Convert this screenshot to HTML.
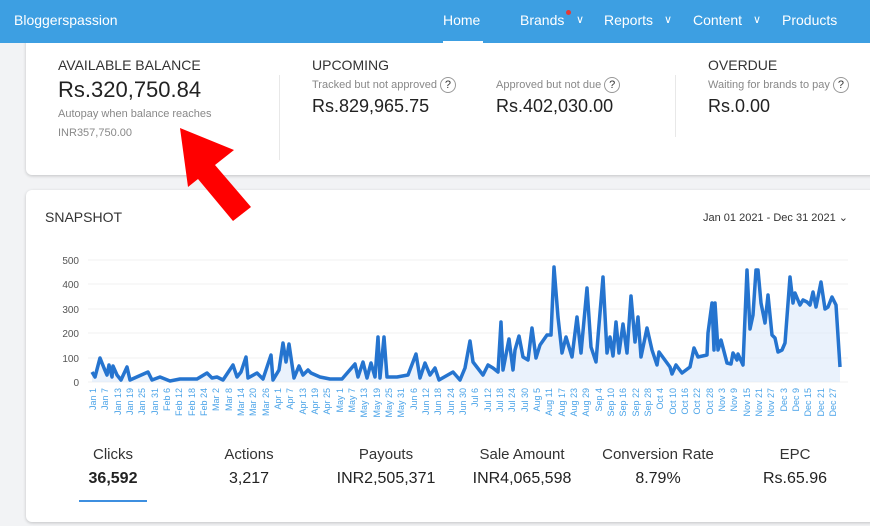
<!DOCTYPE html>
<html><head><meta charset="utf-8"><style>
*{margin:0;padding:0;box-sizing:border-box}
body{width:870px;height:526px;overflow:hidden;background:#f2f3f5;font-family:"Liberation Sans",sans-serif;position:relative;color:#333}
.nav{position:absolute;left:0;top:0;width:870px;height:43px;background:#3d9fe2;color:#fff;font-size:14px;z-index:2}
.nav span{position:absolute;top:12px}
.card{position:absolute;background:#fff;border-radius:6px;box-shadow:0 1px 3px rgba(0,0,0,.2)}
.t{position:absolute;white-space:nowrap}
.q{display:inline-block;width:16px;height:16px;border:1px solid #999;border-radius:50%;font-size:11px;text-align:center;line-height:14px;color:#333;margin-left:3px;vertical-align:middle}
.sl{position:absolute;top:446px;font-size:15px;color:#333;text-align:center;width:140px}
.sv{position:absolute;top:470px;font-size:16px;color:#222;text-align:center;width:150px}
</style></head><body>
<div class="nav">
<span style="left:14px;font-size:14px">Bloggerspassion</span>
<span style="left:443px">Home</span>
<div style="position:absolute;left:443px;top:41px;width:40px;height:2px;background:#fff"></div>
<span style="left:520px">Brands</span>
<div style="position:absolute;left:566px;top:10px;width:5px;height:5px;border-radius:50%;background:#e53935"></div>
<span style="left:576px;top:13px;font-size:11px">∨</span>
<span style="left:604px">Reports</span>
<span style="left:664px;top:13px;font-size:11px">∨</span>
<span style="left:693px">Content</span>
<span style="left:753px;top:13px;font-size:11px">∨</span>
<span style="left:782px">Products</span>
</div>
<div class="card" style="left:26px;top:40px;width:860px;height:135px;border-radius:0 0 6px 6px"></div>
<div style="position:absolute;left:279px;top:75px;width:1px;height:85px;background:#e8e8e8"></div>
<div style="position:absolute;left:675px;top:75px;width:1px;height:62px;background:#e8e8e8"></div>
<div class="t" style="left:58px;top:57px;font-size:14px;color:#333">AVAILABLE BALANCE</div>
<div class="t" style="left:58px;top:77px;font-size:22px;color:#222">Rs.320,750.84</div>
<div class="t" style="left:58px;top:108px;font-size:11px;color:#888">Autopay when balance reaches</div>
<div class="t" style="left:58px;top:127px;font-size:11px;color:#888">INR357,750.00</div>
<div class="t" style="left:312px;top:57px;font-size:14px;color:#333">UPCOMING</div>
<div class="t" style="left:312px;top:77px;font-size:11px;color:#888">Tracked but not approved<span class="q">?</span></div>
<div class="t" style="left:312px;top:96px;font-size:18px;color:#222">Rs.829,965.75</div>
<div class="t" style="left:496px;top:77px;font-size:11px;color:#888">Approved but not due<span class="q">?</span></div>
<div class="t" style="left:496px;top:96px;font-size:18px;color:#222">Rs.402,030.00</div>
<div class="t" style="left:708px;top:57px;font-size:14px;color:#333">OVERDUE</div>
<div class="t" style="left:708px;top:77px;font-size:11px;color:#888">Waiting for brands to pay<span class="q">?</span></div>
<div class="t" style="left:708px;top:96px;font-size:18px;color:#222">Rs.0.00</div>

<div class="card" style="left:26px;top:190px;width:860px;height:332px"></div>
<div class="t" style="left:45px;top:209px;font-size:14px;color:#333">SNAPSHOT</div>
<div class="t" style="left:703px;top:211px;font-size:11px;color:#333">Jan 01 2021 - Dec 31 2021 ⌄</div>
<svg style="position:absolute;left:0;top:0" width="870" height="526">
<g stroke="#f0f0f0" stroke-width="1"><line x1="88" x2="848" y1="260" y2="260"/><line x1="88" x2="848" y1="284" y2="284"/><line x1="88" x2="848" y1="309" y2="309"/><line x1="88" x2="848" y1="333" y2="333"/><line x1="88" x2="848" y1="358" y2="358"/><line x1="88" x2="848" y1="382" y2="382"/></g>
<g font-size="10" fill="#555" text-anchor="end" font-family="Liberation Sans,sans-serif"><text x="79" y="264">500</text><text x="79" y="288">400</text><text x="79" y="313">300</text><text x="79" y="337">200</text><text x="79" y="362">100</text><text x="79" y="386">0</text></g>
<polygon fill="#dceafa" fill-opacity=".6" points="92,382 92,372 95,377 100,358 104,368 107,375 109,365 112,377 113,366 117,375 121,380 127,367 130,380 148,372 152,380 160,377 170,381 180,379 197,379 207,373 212,378 217,377 223,380 233,365 237,377 241,372 246,357 248,378 257,373 263,379 271,355 273,380 279,370 283,343 286,362 289,344 294,378 299,366 303,375 308,370 311,373 320,377 330,379 342,379 355,364 358,377 363,362 367,378 371,363 375,377 378,337 380,378 384,337 387,377 397,377 408,375 416,354 420,378 425,363 430,375 435,368 439,380 453,372 460,380 465,368 470,341 473,362 483,375 488,365 493,368 498,372 501,322 503,370 509,339 513,370 515,350 519,336 523,357 528,360 532,328 536,358 540,345 547,335 551,335 554,267 558,317 562,353 566,337 572,357 577,317 581,353 587,288 591,347 596,362 598,337 603,277 607,353 610,337 613,356 616,322 619,353 623,324 627,353 631,296 635,342 638,317 641,357 647,328 652,350 657,365 659,352 670,367 672,374 676,365 682,373 690,367 694,348 698,357 707,355 708,333 712,303 714,350 715,303 718,350 721,340 727,363 731,364 733,353 737,360 738,354 743,365 747,270 750,329 753,315 756,270 758,270 761,303 765,323 768,295 772,335 775,338 778,352 782,350 785,343 790,277 793,303 795,293 800,305 803,300 807,302 810,305 813,292 816,307 821,282 825,309 828,307 832,297 836,305 840,367 840,382"/>
<polyline fill="none" stroke="#2574cf" stroke-width="3.5" stroke-linejoin="round" points="92,372 95,377 100,358 104,368 107,375 109,365 112,377 113,366 117,375 121,380 127,367 130,380 148,372 152,380 160,377 170,381 180,379 197,379 207,373 212,378 217,377 223,380 233,365 237,377 241,372 246,357 248,378 257,373 263,379 271,355 273,380 279,370 283,343 286,362 289,344 294,378 299,366 303,375 308,370 311,373 320,377 330,379 342,379 355,364 358,377 363,362 367,378 371,363 375,377 378,337 380,378 384,337 387,377 397,377 408,375 416,354 420,378 425,363 430,375 435,368 439,380 453,372 460,380 465,368 470,341 473,362 483,375 488,365 493,368 498,372 501,322 503,370 509,339 513,370 515,350 519,336 523,357 528,360 532,328 536,358 540,345 547,335 551,335 554,267 558,317 562,353 566,337 572,357 577,317 581,353 587,288 591,347 596,362 598,337 603,277 607,353 610,337 613,356 616,322 619,353 623,324 627,353 631,296 635,342 638,317 641,357 647,328 652,350 657,365 659,352 670,367 672,374 676,365 682,373 690,367 694,348 698,357 707,355 708,333 712,303 714,350 715,303 718,350 721,340 727,363 731,364 733,353 737,360 738,354 743,365 747,270 750,329 753,315 756,270 758,270 761,303 765,323 768,295 772,335 775,338 778,352 782,350 785,343 790,277 793,303 795,293 800,305 803,300 807,302 810,305 813,292 816,307 821,282 825,309 828,307 832,297 836,305 840,367"/>
<polygon fill="#f00" points="180,128 234,150 215,165 251,207 233,221 198,179 188,187"/>
</svg>
<svg style="position:absolute;left:0;top:0" width="870" height="526" font-size="9" fill="#4aa3e8" font-family="Liberation Sans,sans-serif">
<g text-anchor="end">
<text transform="translate(96,388) rotate(-90)">Jan 1</text><text transform="translate(108,388) rotate(-90)">Jan 7</text><text transform="translate(121,388) rotate(-90)">Jan 13</text><text transform="translate(133,388) rotate(-90)">Jan 19</text><text transform="translate(145,388) rotate(-90)">Jan 25</text><text transform="translate(158,388) rotate(-90)">Jan 31</text><text transform="translate(170,388) rotate(-90)">Feb 6</text><text transform="translate(182,388) rotate(-90)">Feb 12</text><text transform="translate(195,388) rotate(-90)">Feb 18</text><text transform="translate(207,388) rotate(-90)">Feb 24</text><text transform="translate(219,388) rotate(-90)">Mar 2</text><text transform="translate(232,388) rotate(-90)">Mar 8</text><text transform="translate(244,388) rotate(-90)">Mar 14</text><text transform="translate(256,388) rotate(-90)">Mar 20</text><text transform="translate(269,388) rotate(-90)">Mar 26</text><text transform="translate(281,388) rotate(-90)">Apr 1</text><text transform="translate(293,388) rotate(-90)">Apr 7</text><text transform="translate(306,388) rotate(-90)">Apr 13</text><text transform="translate(318,388) rotate(-90)">Apr 19</text><text transform="translate(330,388) rotate(-90)">Apr 25</text><text transform="translate(343,388) rotate(-90)">May 1</text><text transform="translate(355,388) rotate(-90)">May 7</text><text transform="translate(367,388) rotate(-90)">May 13</text><text transform="translate(380,388) rotate(-90)">May 19</text><text transform="translate(392,388) rotate(-90)">May 25</text><text transform="translate(404,388) rotate(-90)">May 31</text><text transform="translate(417,388) rotate(-90)">Jun 6</text><text transform="translate(429,388) rotate(-90)">Jun 12</text><text transform="translate(441,388) rotate(-90)">Jun 18</text><text transform="translate(454,388) rotate(-90)">Jun 24</text><text transform="translate(466,388) rotate(-90)">Jun 30</text><text transform="translate(478,388) rotate(-90)">Jul 6</text><text transform="translate(491,388) rotate(-90)">Jul 12</text><text transform="translate(503,388) rotate(-90)">Jul 18</text><text transform="translate(515,388) rotate(-90)">Jul 24</text><text transform="translate(528,388) rotate(-90)">Jul 30</text><text transform="translate(540,388) rotate(-90)">Aug 5</text><text transform="translate(552,388) rotate(-90)">Aug 11</text><text transform="translate(565,388) rotate(-90)">Aug 17</text><text transform="translate(577,388) rotate(-90)">Aug 23</text><text transform="translate(589,388) rotate(-90)">Aug 29</text><text transform="translate(602,388) rotate(-90)">Sep 4</text><text transform="translate(614,388) rotate(-90)">Sep 10</text><text transform="translate(626,388) rotate(-90)">Sep 16</text><text transform="translate(639,388) rotate(-90)">Sep 22</text><text transform="translate(651,388) rotate(-90)">Sep 28</text><text transform="translate(663,388) rotate(-90)">Oct 4</text><text transform="translate(676,388) rotate(-90)">Oct 10</text><text transform="translate(688,388) rotate(-90)">Oct 16</text><text transform="translate(700,388) rotate(-90)">Oct 22</text><text transform="translate(713,388) rotate(-90)">Oct 28</text><text transform="translate(725,388) rotate(-90)">Nov 3</text><text transform="translate(737,388) rotate(-90)">Nov 9</text><text transform="translate(750,388) rotate(-90)">Nov 15</text><text transform="translate(762,388) rotate(-90)">Nov 21</text><text transform="translate(774,388) rotate(-90)">Nov 27</text><text transform="translate(787,388) rotate(-90)">Dec 3</text><text transform="translate(799,388) rotate(-90)">Dec 9</text><text transform="translate(811,388) rotate(-90)">Dec 15</text><text transform="translate(824,388) rotate(-90)">Dec 21</text><text transform="translate(836,388) rotate(-90)">Dec 27</text>
</g></svg>
<div class="sl" style="left:43px">Clicks</div><div class="sv" style="left:38px;font-weight:bold">36,592</div>
<div style="position:absolute;left:79px;top:500px;width:68px;height:2px;background:#3d8fe0"></div>
<div class="sl" style="left:179px">Actions</div><div class="sv" style="left:174px">3,217</div>
<div class="sl" style="left:316px">Payouts</div><div class="sv" style="left:311px">INR2,505,371</div>
<div class="sl" style="left:452px">Sale Amount</div><div class="sv" style="left:447px">INR4,065,598</div>
<div class="sl" style="left:588px;width:140px">Conversion Rate</div><div class="sv" style="left:583px">8.79%</div>
<div class="sl" style="left:725px">EPC</div><div class="sv" style="left:720px">Rs.65.96</div>
</body></html>
